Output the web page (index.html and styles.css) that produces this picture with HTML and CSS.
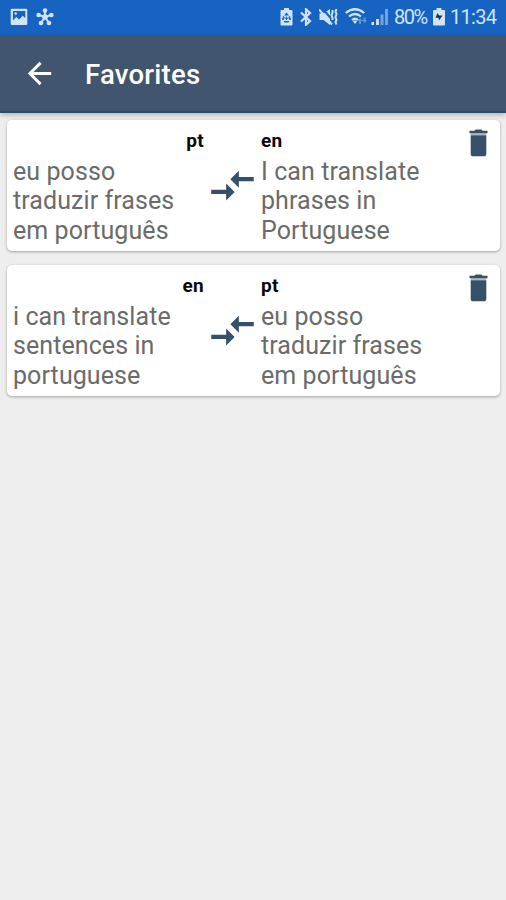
FILE: index.html
```html
<!DOCTYPE html>
<html lang="en">
<head>
<meta charset="utf-8">
<title>Favorites</title>
<link rel="stylesheet" href="styles.css">
</head>
<body>
<svg class="defs" width="0" height="0" aria-hidden="true">
  <symbol id="swap" viewBox="0 0 24 24"><path d="M9.01 14H2v2h7.01v3L13 15l-3.99-4v3zm5.98-1v-3H22V8h-7.01V5L11 9l3.99 4z"/></symbol>
  <symbol id="trash" viewBox="0 0 19 28" preserveAspectRatio="none"><path d="M.5 1.700h4.800L6.600.5h5.800l1.300 1.200h4.800v2.500H.5z"/><path d="M1.700 4.200h15.600v2H1.700z" opacity=".4"/><path d="M1.700 6.200h15.600v18.500q0 2.600-2.600 2.600H4.300q-2.600 0-2.600-2.600z"/></symbol>
</svg>
<header class="status">
  <div class="group">
    <svg class="i-image" width="18" height="18" viewBox="0 0 18 18"><path fill-rule="evenodd" d="M2 .7h14Q17.3.7 17.3 2v13.7q0 1.3-1.3 1.3H2Q.7 17 .7 15.700V2Q.7.700 2 .7zM3 3v9.500l3.300-3.500 2.700 2.500 3.800-3.800 2.500 2.500V3z"/><circle cx="5.700" cy="5.500" r="1.200"/></svg>
    <svg class="i-hub" width="18" height="18" viewBox="0 0 18 18"><g stroke="currentColor" stroke-width="2"><path d="M9 9V3M9 9L3 7M9 9l6-2M9 9l-4 6M9 9l4 6"/></g><circle cx="9" cy="9" r="2.800"/><circle cx="9" cy="2.600" r="2.300"/><circle cx="2.600" cy="7" r="2.300"/><circle cx="15.400" cy="7" r="2.300"/><circle cx="5" cy="15" r="2.300"/><circle cx="13" cy="15" r="2.300"/></svg>
  </div>
  <div class="group right">
    <svg class="i-saver" width="13" height="18" viewBox="0 0 13 18"><path d="M4 0h5v2h2.500q1 0 1 1v13.500q0 1-1 1h-10q-1 0-1-1V3q0-1 1-1H4z"/><g class="cut"><path d="M6.500 4.500l2.500 3h-5zM3 8l1.700 1-1 3H2zM10 8l-1.700 1 1 3H11zM3.500 13h6l-1 1.500h-4z"/><path d="M6 8.500h1v3.500H6zM4.800 9.700h3.400v1H4.800z"/></g></svg>
    <svg class="i-bt" width="12" height="18" viewBox="0 0 12 18"><path fill="none" stroke="currentColor" stroke-width="2.200" d="M1 4.500l9 8.500-4 3.700V1.300L10 5l-9 8.500"/></svg>
    <svg class="i-mute" width="19" height="18" viewBox="0 0 19 18"><path d="M.5 5.500h4L11 1v16l-6.500-5h-4z"/><path class="slash" d="M4 1l11 13"/><path fill="none" stroke="currentColor" stroke-width="2" d="M0 1.500l13 15M13.500 2v3l-1 2 1 3v2M17.500 1l-1 2.500 1 2.500-1 3 1 3-1 2 1 2.500"/></svg>
    <svg class="i-wifi" width="24" height="18" viewBox="0 0 24 18"><g fill="none" stroke="currentColor" stroke-width="2.200"><path d="M.8 5Q10-2.500 19.200 5M4 8.500q6-5 12 0M7 12q3-2.500 6 0"/></g><path d="M7.800 13.200q2.200-1.500 4.400 0L10 16z"/><path opacity=".4" d="M12.500 13l2.500-3 2.500 3h-1.500v3h-2v-3zM17 12h1.500V9.500h2V12H22l-2.500 3z"/></svg>
    <svg class="i-signal" width="18" height="18" viewBox="0 0 18 18"><path d="M.5 14h2.500v3H.5zM5 11h3v6H5z"/><path opacity=".5" d="M9.500 6.500h3V17h-3zM14 1h3v16h-3z"/></svg>
    <span class="pct">80%</span>
    <svg class="i-batt" width="12" height="18" viewBox="0 0 12 18"><path d="M3.500 0h5v2H11q1 0 1 1v13.500q0 1-1 1H1q-1 0-1-1V3q0-1 1-1h2.500z"/><path class="bolt" d="M4.500 5l1.500 2.500h3.500L6 12.500l-.5-2.700h-3z"/></svg>
    <span class="time">11:34</span>
  </div>
</header>
<nav class="appbar">
  <svg class="back" width="35" height="35" viewBox="0 0 24 24"><path d="M20 11H7.830l5.590-5.590L12 4l-8 8 8 8 1.410-1.410L7.830 13H20v-2z"/></svg>
  <h1>Favorites</h1>
</nav>
<main>
  <article class="card">
    <section class="from"><b>pt</b><p>eu posso<br>traduzir frases<br>em português</p></section>
    <svg class="swap"><use href="#swap"/></svg>
    <section><b>en</b><p>I can translate<br>phrases in<br>Portuguese</p></section>
    <svg class="trash"><use href="#trash"/></svg>
  </article>
  <article class="card">
    <section class="from"><b>en</b><p>i can translate<br>sentences in<br>portuguese</p></section>
    <svg class="swap"><use href="#swap"/></svg>
    <section><b>pt</b><p>eu posso<br>traduzir frases<br>em português</p></section>
    <svg class="trash"><use href="#trash"/></svg>
  </article>
</main>
</body>
</html>
```
FILE: styles.css
```css
* { box-sizing: border-box; }
body {
  margin: 0;
  min-height: 900px;
  background: #eee;
  font-family: Roboto, "Liberation Sans", sans-serif;
}
svg { display: block; flex: none; fill: currentColor; }
.defs { position: absolute; }
.status {
  height: 35px;
  padding: 0 9px 1px 10px;
  display: flex;
  align-items: center;
  justify-content: space-between;
  background: #1763c1;
  color: #cfe3fb;
}
.group { display: flex; align-items: center; gap: 8px; }
.right { gap: 0; }
.i-saver { margin-right: 7px; }
.i-bt { margin-right: 7px; }
.i-mute { margin-right: 7px; }
.i-wifi { margin-right: 2px; }
.i-signal { margin-right: 5px; }
.i-batt { margin: 0 5px 0 6px; }
.cut { fill: #1763c1; }
.bolt { fill: #1c3150; }
.slash { stroke: #1763c1; stroke-width: 2; }
.pct, .time { font-size: 20px; line-height: 24px; white-space: nowrap; }
.pct { width: 33px; letter-spacing: -1.500px; }
.time { width: 47px; letter-spacing: -.700px; }
.appbar {
  position: relative;
  height: 78px;
  padding: 0 22px;
  display: flex;
  align-items: center;
  background: #41566e;
  border-bottom: 2px solid #304c65;
  box-shadow: 0 2px 5px rgba(0, 0, 0, .25);
  color: #fff;
}
h1 { margin: 4px 0 0 28px; font-size: 27.500px; line-height: 32px; font-weight: 500; letter-spacing: .250px; }
main { padding: 7px 6px 0 7px; display: grid; gap: 14px; }
.card {
  height: 131px;
  padding: 7px 11px 0 6px;
  display: grid;
  grid-template-columns: 192px 56px 1fr 20px;
  align-items: start;
  border-radius: 5px;
  background: #fff;
  box-shadow: 0 1px 3px rgba(0, 0, 0, .32);
}
b { display: block; height: 29.500px; color: #080808; font-size: 19px; line-height: 27px; font-weight: 700; letter-spacing: .300px; }
.from b { padding-right: 1px; text-align: right; }
p { margin: 0; color: #6b6b6b; font-size: 25px; line-height: 29.500px; letter-spacing: .080px; white-space: nowrap; }
.swap { width: 51px; height: 51px; margin: 33px 0 0 2px; color: #365069; }
.trash { width: 19px; height: 28px; margin-top: 2px; color: #365069; }
```
